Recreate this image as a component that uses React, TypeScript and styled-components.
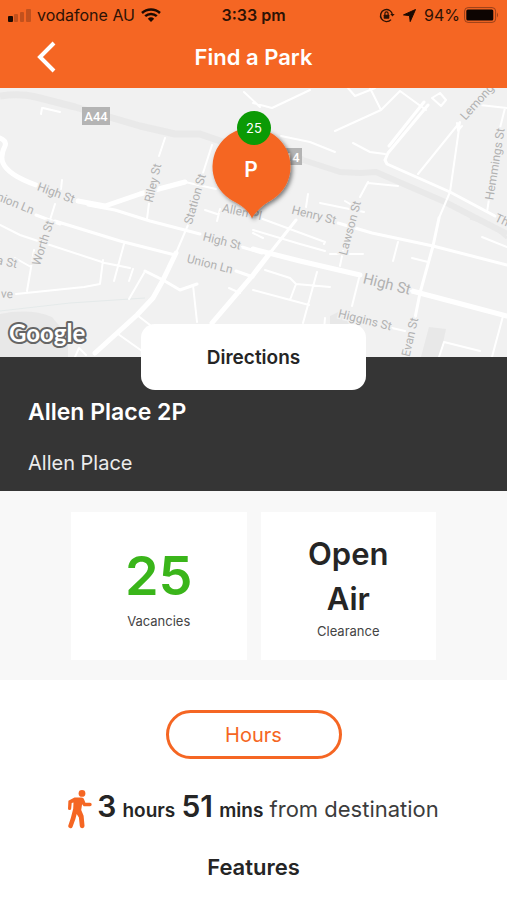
import React from "react";
import styled, { createGlobalStyle } from "styled-components";

const colors = {
  orange: "#f56623",
  dark: "#353535",
  ink: "#252525",
  green: "#3ab51a",
  badge: "#0b9a05",
  panel: "#f8f8f8",
};

const GlobalStyle = createGlobalStyle`
  *, *::before, *::after { box-sizing: border-box; }
  body { margin: 0; background: #fff; color: ${colors.ink}; font-family: Inter, "Liberation Sans", sans-serif; }
  h1, h2, p, dl, dd, dt { margin: 0; }
  button { font-family: inherit; cursor: pointer; }
`;

const Page = styled.div`
  min-height: 100vh;
  overflow: hidden;
  background: #fff;
`;

const Header = styled.header`
  background: ${colors.orange};
`;

const StatusBar = styled.div`
  display: grid;
  grid-template-columns: 1fr auto 1fr;
  align-items: center;
  height: 30px;
  padding: 0 8px;
  color: #2d1205;
  font-size: 16px;
`;

const StatusGroup = styled.div<{ $end?: boolean }>`
  display: flex;
  align-items: center;
  gap: ${({ $end }) => ($end ? 8 : 6)}px;
  justify-content: ${({ $end }) => ($end ? "flex-end" : "flex-start")};
`;

const Power = styled.div`
  display: flex;
  align-items: center;
  gap: 4px;
`;

const Clock = styled.time`
  font-weight: 600;
`;

const NavBar = styled.nav`
  display: grid;
  grid-template-columns: 64px 1fr 64px;
  align-items: center;
  height: 58px;
  padding-bottom: 4px;
`;

const BackButton = styled.button`
  display: flex;
  justify-content: flex-end;
  padding: 0 8px 0 0;
  border: 0;
  background: none;
`;

const NavTitle = styled.h1`
  color: #fff;
  font-size: 22px;
  font-weight: 600;
  line-height: 28px;
  text-align: center;
`;

const MapArea = styled.section`
  position: relative;
  height: 269px;
  background: #f1f1f1;
`;

const MapCanvas = styled.svg`
  display: block;
  width: 100%;
  height: 100%;
`;

const Pin = styled.svg`
  position: absolute;
  top: 18px;
  left: 50%;
  margin-left: -47px;
`;

const Place = styled.section`
  display: flex;
  flex-direction: column;
  background: ${colors.dark};
  color: #fff;
  padding: 0 28px 14px;
`;

const DirectionsButton = styled.button`
  position: relative;
  align-self: center;
  width: 50%;
  height: 66px;
  margin-top: -33px;
  border: 0;
  border-radius: 14px;
  background: #fff;
  color: ${colors.ink};
  font-size: 19px;
  font-weight: 600;
`;

const PlaceName = styled.h2`
  margin-top: 8px;
  font-size: 23px;
  font-weight: 600;
  line-height: 28px;
`;

const PlaceStreet = styled.p`
  margin-top: 23px;
  color: #ececec;
  font-size: 20px;
  line-height: 28px;
`;

const Stats = styled.dl`
  display: grid;
  grid-template-columns: 1fr 1fr;
  gap: 14px;
  padding: 21px 14% 20px;
  background: ${colors.panel};
`;

const StatCard = styled.div`
  display: flex;
  flex-direction: column-reverse;
  align-items: center;
  justify-content: center;
  min-height: 148px;
  background: #fff;
`;

const StatValue = styled.dd<{ $large?: boolean }>`
  max-width: 100px;
  color: ${({ $large }) => ($large ? colors.green : colors.ink)};
  font-size: ${({ $large }) => ($large ? 54 : 31)}px;
  font-weight: 600;
  line-height: ${({ $large }) => ($large ? 70 : 45)}px;
  text-align: center;
`;

const StatLabel = styled.dt`
  color: #444;
  font-size: 13px;
  line-height: 20px;
`;

const Details = styled.section`
  display: flex;
  flex-direction: column;
  align-items: center;
  padding-top: 30px;
`;

const HoursButton = styled.button`
  width: 176px;
  height: 49px;
  border: 3px solid ${colors.orange};
  border-radius: 25px;
  background: #fff;
  color: ${colors.orange};
  font-size: 20px;
`;

const Walk = styled.p`
  display: flex;
  align-items: center;
  gap: 5px;
  margin-top: 27px;
  color: #3c3c3c;
  font-size: 22px;
  line-height: 40px;
  white-space: nowrap;
`;

const Amount = styled.strong`
  color: ${colors.ink};
  font-size: 30px;
  font-weight: 600;
`;

const Unit = styled.strong`
  color: ${colors.ink};
  font-size: 19px;
  font-weight: 600;
`;

const SectionTitle = styled.h2`
  margin-top: 20px;
  font-size: 22px;
  font-weight: 600;
  line-height: 32px;
`;

const SignalIcon = () => (
  <svg width="23" height="13" viewBox="0 0 23 13" aria-hidden="true">
    <rect x="0" y="7" width="5" height="6" rx="1" fill="#1c0a02" />
    <g fill="#a8461b" opacity=".65">
      <rect x="6" y="5" width="4" height="8" rx="1" />
      <rect x="12" y="3" width="4" height="10" rx="1" />
      <rect x="18" y="0" width="5" height="13" rx="1" />
    </g>
  </svg>
);

const WifiIcon = () => (
  <svg width="20" height="14" viewBox="0 0 20 14" aria-hidden="true" fill="none" stroke="#1c0a02" strokeWidth="2.5">
    <path d="M1 5a13 13 0 0 1 18 0" />
    <path d="M4.2 8.2a8.5 8.5 0 0 1 11.6 0" />
    <path d="M10 14 6.8 10.8a4.7 4.7 0 0 1 6.4 0Z" fill="#1c0a02" stroke="none" />
  </svg>
);

const RotationLockIcon = () => (
  <svg width="16" height="15" viewBox="0 0 16 15" aria-hidden="true" fill="none" stroke="#2d1205" strokeWidth="1.4">
    <path d="M13.5 7A6 6 0 1 0 12 11.6" />
    <path d="m11.2 6 2.3 2.6L15.7 6Z" fill="#2d1205" stroke="none" />
    <rect x="4.7" y="6.7" width="5.6" height="4" rx=".6" fill="#2d1205" stroke="none" />
    <path d="M5.9 7V5.5a1.6 1.6 0 0 1 3.2 0V7" strokeWidth="1.2" />
  </svg>
);

const LocationIcon = () => (
  <svg width="13" height="13" viewBox="0 0 13 13" aria-hidden="true">
    <path d="M12.5.5 7.2 12.6 6.5 6.6.5 5.9Z" fill="#1c0a02" stroke="#1c0a02" strokeLinejoin="round" />
  </svg>
);

const BatteryIcon = () => (
  <svg width="35" height="16" viewBox="0 0 35 16" aria-hidden="true">
    <rect x=".6" y=".6" width="31" height="14.8" rx="3.5" fill="none" stroke="#98401a" strokeWidth="1" />
    <rect x="2.3" y="2.4" width="27" height="11.2" rx="1.5" fill="#0d0502" />
    <path d="M33 5.5q2 2.5 0 5Z" fill="#98401a" />
  </svg>
);

const WalkerIcon = () => (
  <svg width="24" height="40" viewBox="0 0 24 40" aria-hidden="true" fill={colors.orange}>
    <circle cx="14" cy="4.4" r="3.4" />
    <path d="M6.5 8.4h7c1.400 0 2.200.8 2.600 2l1.300 3.400h4.600a1.500 1.500 0 0 1 0 3.400h-6.300l-1.600-2-.9 5.800 2.400 5.800.9 9.800a2.300 2.300 0 0 1-4.700.4l-.9-8.500-2.200-3.600-1.300 5-2.800 7.800a2.200 2.200 0 0 1-4.200-1.500l2.500-7.500 2.300-9 .3-6.300-1.800.7-.5 5.500a1.600 1.600 0 0 1-3.200-.2l.4-7.700Z" />
  </svg>
);

const thinRoads = [
  "M165 50 159 68M149 115 147 131",
  "M212 57 203 85M188 137 176 165",
  "M205 122 217 126M217 133 220 121",
  "M62 92 61 101M55 116 50 132",
  "M0 137 20 147 50 157 105 175 130 180",
  "M15 170 31 179M34 162 27 203",
  "M16 206 84 199 100 196 103 172",
  "M124 156 114 193M133 181 129 193M144 185 129 211",
  "M185 94 216 101M42 20 41 26M43 20 60 24",
  "M137 227 150 237M118 246 142 263",
  "M75 269 79 260 86 267",
  "M193 197 197 234M229 200 240 205",
  "M253 142 300 156 325 163M330 166 363 166M260 130 325 154 324 156",
  "M263 150 253 145M320 115 364 124",
  "M368 94 360 109M343 163 340 178",
  "M398 154 393 173M412 170 428 174",
  "M317 184 303 235M265 182 290 190 296 196 290 212M296 196 330 199",
  "M253 202 309 217",
  "M359 190 352 218M325 230 324 242 335 242M392 240 405 243",
  "M439 269 444 254 480 263",
  "M503 228 492 269M482 149 507 159",
  "M418 86 460 34 450 104 439 130M457 35 458 43 462 38",
  "M480 17 507 20M505 20 500 40M489 111 487 124",
  "M335 43 381 22 400 3 426 22",
  "M348 0 355 8 375 0M370 0 381 22",
  "M432 10 440 5 446 12 441 18 432 10",
  "M353 55 370 64 385 66",
  "M253 15 272 20 310 2M244 4 260 19",
  "M281 48 310 54 335 64",
  "M308 106 306 119M345 113 355 119M368 95 398 98",
];

const midRoads = [
  "M36 127 60 136",
  "M55 133 120 153 175 167",
  "M236 183 253 189",
  "M88 117 115 122 150 133 200 146M242 159 262 165",
  "M145 183 163 192 180 202 197 196",
  "M338 135 372 145 433 158 507 177",
  "M385 72 388 65 428 17M389 58 424 14",
  "M385 72 387 76 450 104 495 128",
  "M439 130 433 158 420 205 413 240",
  "M296 132 270 165",
];

const wideRoads = [
  "M0 50Q7 53 5 58Q0 68 3 75Q8 87 36 97",
  "M78 113 105 118 140 106 185 94",
  "M176 165 163 192 153 210 137 227 95 265",
  "M253 161 300 173 360 187M412 203 450 213 507 228",
  "M270 165 253 187 212 235",
];

type MapLabel = { text: string; x: number; y: number; turn: number; size?: number };

const labels: MapLabel[] = [
  { text: "High St", x: 56, y: 105, turn: 20 },
  { text: "Union Ln", x: 12, y: 114, turn: 22 },
  { text: "Riley St", x: 153, y: 95, turn: -77 },
  { text: "Station St", x: 195, y: 111, turn: -74 },
  { text: "Worth St", x: 43, y: 155, turn: -72 },
  { text: "a St", x: 7, y: 174, turn: 12 },
  { text: "ve", x: 7, y: 206, turn: 2 },
  { text: "High St", x: 222, y: 153, turn: 14 },
  { text: "Union Ln", x: 210, y: 176, turn: 14 },
  { text: "Allen Pl", x: 242, y: 124, turn: 12 },
  { text: "Henry St", x: 314, y: 127, turn: 14 },
  { text: "Lawson St", x: 350, y: 140, turn: -75 },
  { text: "High St", x: 387, y: 196, turn: 14, size: 15 },
  { text: "Higgins St", x: 365, y: 232, turn: 14 },
  { text: "Evan St", x: 410, y: 249, turn: -77 },
  { text: "Hemmings St", x: 495, y: 76, turn: -81 },
  { text: "Lemong", x: 477, y: 14, turn: -48 },
  { text: "Th", x: 502, y: 132, turn: 25 },
];

const StreetMap = () => (
  <MapCanvas viewBox="0 0 507 269" preserveAspectRatio="xMidYMid slice" role="img" aria-label="Street map">
    <rect width="507" height="269" fill="#f1f1f1" />
    <path d="M0 226Q30 220 52 229L68 248V269H0ZM330 228 342 222 351 236 347 248H330ZM429 239 446 241 440 269H421Z" fill="#e8e8e8" />
    <path d="M0 223 70 215 145 210" stroke="#e5eaea" fill="none" />
    <g fill="none" stroke="#e9e9e9" strokeLinejoin="round">
      <path d="M0 8Q20 5 36 9L75 19 140 38 175 46 200 46 240 60 303 72" strokeWidth="7" />
      <path d="M303 72 340 84 360 85 376 84 445 114 507 146" strokeWidth="6" />
      <path d="M470 130 490 136 507 150" strokeWidth="3" />
    </g>
    <g fill="none" stroke="#fff" strokeLinejoin="round" strokeLinecap="round">
      <path d={thinRoads.join("")} strokeWidth="2" />
      <path d={midRoads.join("")} strokeWidth="3" />
      <path d={wideRoads.join("")} strokeWidth="5" />
    </g>
    <g fontFamily="Roboto, sans-serif" textAnchor="middle" dominantBaseline="central">
      {labels.map(({ text, x, y, turn, size = 12 }) => (
        <text
          key={`${text}-${x}`}
          transform={`translate(${x} ${y}) rotate(${turn})`}
          fontSize={size}
          fill="#b2b2b2"
          stroke="#f1f1f1"
          strokeWidth="3"
          paintOrder="stroke"
        >
          {text}
        </text>
      ))}
      <rect x="82" y="19" width="28" height="18" fill="#b4b4b4" />
      <text x="96" y="28" fontSize="13" fontWeight="500" fill="#fff">A44</text>
      <rect x="274" y="60" width="28" height="17" fill="#b4b4b4" />
      <text x="288" y="69" fontSize="13" fontWeight="500" fill="#fff">A14</text>
    </g>
    <text
      x="9"
      y="254"
      fontFamily="Lato, sans-serif"
      fontSize="24"
      fontWeight="700"
      fill="#fff"
      stroke="#666"
      strokeWidth="4"
      strokeLinejoin="round"
      paintOrder="stroke"
    >
      Google
    </text>
  </MapCanvas>
);

const ParkingPin = () => (
  <Pin width="92" height="120" viewBox="0 0 92 120" role="img" aria-label="Parking, 25 vacancies">
    <defs>
      <filter id="pin-shadow" x="-20%" y="-20%" width="140%" height="140%">
        <feDropShadow dx="2" dy="2" stdDeviation="2" floodColor="#000" floodOpacity=".5" />
      </filter>
    </defs>
    <path
      d="M45 112C41 104 34 99 26 95A39 39 0 1 1 63 95C56 99 50 104 45 112Z"
      fill={colors.orange}
      filter="url(#pin-shadow)"
    />
    <circle cx="47" cy="22" r="17" fill={colors.badge} />
    <g fill="#fff" fontFamily="Inter, sans-serif" textAnchor="middle" dominantBaseline="central">
      <text x="47" y="22" fontSize="13">25</text>
      <text x="44" y="63" fontSize="21" fontWeight="600">P</text>
    </g>
  </Pin>
);

export default function App() {
  return (
    <Page>
      <GlobalStyle />
      <Header>
        <StatusBar>
          <StatusGroup>
            <SignalIcon />
            <span>vodafone AU</span>
            <WifiIcon />
          </StatusGroup>
          <Clock>3:33 pm</Clock>
          <StatusGroup $end>
            <RotationLockIcon />
            <LocationIcon />
            <Power>
              <span>94%</span>
              <BatteryIcon />
            </Power>
          </StatusGroup>
        </StatusBar>
        <NavBar>
          <BackButton type="button" aria-label="Back">
            <svg width="20" height="32" viewBox="0 0 20 32" fill="none" stroke="#fff" strokeWidth="4" aria-hidden="true">
              <path d="M18 2 4 16 18 30" />
            </svg>
          </BackButton>
          <NavTitle>Find a Park</NavTitle>
        </NavBar>
      </Header>
      <main>
        <MapArea>
          <StreetMap />
          <ParkingPin />
        </MapArea>
        <Place>
          <DirectionsButton type="button">Directions</DirectionsButton>
          <PlaceName>Allen Place 2P</PlaceName>
          <PlaceStreet>Allen Place</PlaceStreet>
        </Place>
        <Stats>
          <StatCard>
            <StatLabel>Vacancies</StatLabel>
            <StatValue $large>25</StatValue>
          </StatCard>
          <StatCard>
            <StatLabel>Clearance</StatLabel>
            <StatValue>Open Air</StatValue>
          </StatCard>
        </Stats>
        <Details>
          <HoursButton type="button">Hours</HoursButton>
          <Walk>
            <WalkerIcon />
            <span>
              <Amount>3</Amount> <Unit>hours</Unit> <Amount>51</Amount> <Unit>mins</Unit> from destination
            </span>
          </Walk>
          <SectionTitle>Features</SectionTitle>
        </Details>
      </main>
    </Page>
  );
}
